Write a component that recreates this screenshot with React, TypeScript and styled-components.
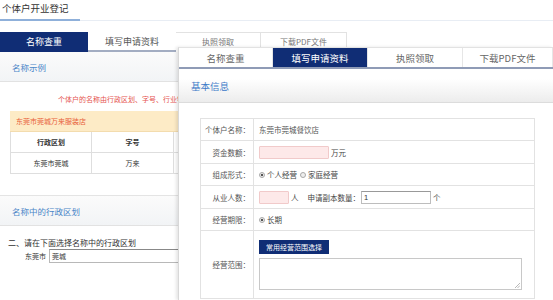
import React from "react";
import styled, { createGlobalStyle } from "styled-components";

const GlobalStyle = createGlobalStyle`
  html, body { margin: 0; padding: 0; background: #fff; }
  body { font-family: "Noto Sans CJK SC", "Noto Sans", sans-serif; color: #333; }
  * { box-sizing: border-box; }
`;

const NAVY = "#102d75";

const Page = styled.div`
  position: relative;
  width: 553px;
  height: 300px;
  overflow: hidden;
  background: #fff;
`;

const TitleBar = styled.div`
  height: 21px;
  border-bottom: 1px solid #e8edf4;
`;

const Title = styled.div`
  width: 80px;
  padding-left: 2px;
  font-size: 9.5px;
  line-height: 16px;
  height: 21px;
  color: #333;
  border-bottom: 2px solid #8fb0da;
`;

const BgTabs = styled.div`
  display: flex;
  margin-top: 11px;
  height: 20px;
`;

const BgTab = styled.div<{ $w: number; $active?: boolean; $under?: boolean }>`
  width: ${(p) => p.$w}px;
  height: 20px;
  display: flex;
  align-items: center;
  justify-content: center;
  font-size: 9px;
  color: ${(p) => (p.$active ? "#fff" : "#555")};
  background: ${(p) => (p.$active ? NAVY : "#fff")};
  border-bottom: 2px solid ${(p) => (p.$active ? NAVY : "#a3adc2")};
  ${(p) => (p.$under ? "border-top:1px solid #e2e2e2;border-right:1px solid #e2e2e2;border-bottom:none;align-items:flex-start;padding-top:3px;font-size:8px;color:#777;" : "")}
`;

const BgPanel = styled.div`
  width: 360px;
`;

const SectionHead = styled.div`
  height: 30px;
  line-height: 30px;
  padding-left: 12px;
  font-size: 8.5px;
  color: #4a86c8;
  background: linear-gradient(#fbfbfb, #f2f4f6);
  border-bottom: 1px solid #e2e2e2;
`;

const Section = styled.div`
  padding-bottom: 21px;
  border-bottom: 1px solid #e4e4e4;
`;

const RedNote = styled.div`
  padding: 11px 0 0 58px;
  line-height: 12px;
  font-size: 7px;
  color: #e5534f;
  white-space: nowrap;
`;

const YellowBand = styled.div`
  margin: 6px 0 0 10px;
  height: 21px;
  line-height: 21px;
  padding-left: 6px;
  font-size: 7px;
  color: #e8603a;
  background: #fdebc6;
  border-bottom: 1px solid #f3dcae;
`;

const ExTable = styled.div`
  margin-left: 10px;
  display: grid;
  grid-template-columns: 81px 82px 82px 82px;
  border-left: 1px solid #dedede;
`;

const ExCell = styled.div<{ $head?: boolean }>`
  height: 21px;
  display: flex;
  align-items: center;
  justify-content: center;
  font-size: 7px;
  font-weight: ${(p) => (p.$head ? 700 : 400)};
  color: #333;
  border-right: 1px solid #dedede;
  border-bottom: 1px solid #dedede;
`;

const Instruction = styled.div`
  margin-top: 11px;
  padding-left: 8px;
  line-height: 12px;
  font-size: 8px;
  color: #333;
`;

const DistrictRow = styled.div`
  display: flex;
  align-items: center;
  padding-left: 25px;
  gap: 3px;
  height: 14px;
  font-size: 7px;
  color: #333;
`;

const DistrictInput = styled.div`
  width: 220px;
  height: 14px;
  border: 1px solid #b8b8b8;
  border-top-color: #888;
  padding-left: 2px;
  line-height: 12px;
  font-size: 7px;
  color: #333;
`;

const Overlay = styled.div`
  position: absolute;
  left: 178px;
  top: 47px;
  width: 375px;
  height: 253px;
  background: #fff;
  border-left: 1px solid #d8d8d8;
  border-top: 1px solid #e2e2e2;
  box-shadow: -2px 0 3px rgba(0, 0, 0, 0.1);
`;

const OvTabs = styled.div`
  display: flex;
  height: 21px;
  border-bottom: 2px solid #8f9bb6;
`;

const OvTab = styled.div<{ $w: number; $active?: boolean }>`
  width: ${(p) => p.$w}px;
  display: flex;
  align-items: center;
  justify-content: center;
  font-size: 9.5px;
  color: ${(p) => (p.$active ? "#fff" : "#666")};
  background: ${(p) => (p.$active ? NAVY : "#fff")};
  border-right: 1px solid #e6e6e6;
`;

const OvHead = styled.div`
  height: 34px;
  padding: 10px 0 0 12px;
  font-size: 9.5px;
  color: #3c7ac8;
  background: linear-gradient(#fff 30%, #ececec);
  border-bottom: 1px solid #dcdcdc;
`;

const OvBody = styled.div`
  padding: 15px 18px 0 21px;
`;

const Form = styled.div`
  display: grid;
  grid-template-columns: 53px 1fr;
  border: 1px solid #e2e2e2;
  border-bottom: none;
`;

const Label = styled.div<{ $h: number }>`
  height: ${(p) => p.$h}px;
  display: flex;
  align-items: center;
  justify-content: flex-end;
  padding-right: 3px;
  font-size: 7.5px;
  color: #555;
  border-right: 1px solid #e2e2e2;
  border-bottom: 1px solid #e2e2e2;
`;

const Value = styled.div<{ $h: number; $col?: boolean }>`
  height: ${(p) => p.$h}px;
  display: flex;
  flex-direction: ${(p) => (p.$col ? "column" : "row")};
  align-items: ${(p) => (p.$col ? "flex-start" : "center")};
  padding-left: 5px;
  padding-top: ${(p) => (p.$col ? "9px" : "0")};
  gap: ${(p) => (p.$col ? "4px" : "0")};
  font-size: 7.5px;
  color: #555;
  border-bottom: 1px solid #e2e2e2;
`;

const PinkInput = styled.div<{ $w: number }>`
  width: ${(p) => p.$w}px;
  height: 13px;
  background: #fde9e9;
  border: 1px solid #f1caca;
  border-radius: 1px;
  margin-right: 2px;
`;

const PlainInput = styled.div`
  width: 70px;
  height: 13px;
  border: 1px solid #bdbdbd;
  border-top-color: #999;
  padding-left: 2px;
  font-family: "Liberation Sans", sans-serif;
  font-size: 7.5px;
  line-height: 11px;
  color: #333;
  margin: 0 2px 0 1px;
`;

const Unit = styled.span<{ $ml?: number }>`
  margin-left: ${(p) => p.$ml ?? 0}px;
  color: #444;
`;

const RadioDot = styled.span<{ $on?: boolean }>`
  width: 6px;
  height: 6px;
  border-radius: 50%;
  border: 1px solid #a8a8a8;
  background: ${(p) => (p.$on ? "radial-gradient(circle, #555 0 1.3px, #f2f2f2 1.6px)" : "#eee")};
  margin-right: 2px;
  flex: none;
`;

const RadioLabel = styled.span`
  margin-right: 3px;
  color: #444;
`;

const NavyButton = styled.div`
  width: 70px;
  height: 14px;
  background: ${NAVY};
  color: #fff;
  font-size: 7px;
  display: flex;
  align-items: center;
  justify-content: center;
`;

const TextArea = styled.div`
  position: relative;
  width: 263px;
  height: 32px;
  border: 1px solid #c8c8c8;
`;

const Grip = styled.svg`
  position: absolute;
  right: 1px;
  bottom: 1px;
`;

export default function App() {
  return (
    <Page>
      <GlobalStyle />
      <TitleBar>
        <Title>个体户开业登记</Title>
      </TitleBar>
      <BgTabs>
        <BgTab $w={88} $active>名称查重</BgTab>
        <BgTab $w={88}>填写申请资料</BgTab>
        <BgTab $w={85} $under>执照领取</BgTab>
        <BgTab $w={86} $under>下载PDF文件</BgTab>
      </BgTabs>
      <BgPanel>
        <Section>
          <SectionHead>名称示例</SectionHead>
          <RedNote>个体户的名称由行政区划、字号、行业特点、组织形式依次组成</RedNote>
          <YellowBand>东莞市莞城万来服装店</YellowBand>
          <ExTable>
            <ExCell $head>行政区划</ExCell>
            <ExCell $head>字号</ExCell>
            <ExCell $head>行业特点</ExCell>
            <ExCell $head>组织形式</ExCell>
            <ExCell>东莞市莞城</ExCell>
            <ExCell>万来</ExCell>
            <ExCell>服装</ExCell>
            <ExCell>店</ExCell>
          </ExTable>
        </Section>
        <SectionHead>名称中的行政区划</SectionHead>
        <Instruction>二、请在下面选择名称中的行政区划</Instruction>
        <DistrictRow>
          东莞市
          <DistrictInput>莞城</DistrictInput>
        </DistrictRow>
      </BgPanel>

      <Overlay>
        <OvTabs>
          <OvTab $w={94}>名称查重</OvTab>
          <OvTab $w={95} $active>填写申请资料</OvTab>
          <OvTab $w={95}>执照领取</OvTab>
          <OvTab $w={90}>下载PDF文件</OvTab>
        </OvTabs>
        <OvHead>基本信息</OvHead>
        <OvBody>
          <Form>
            <Label $h={22}>个体户名称：</Label>
            <Value $h={22}>东莞市莞城餐饮店</Value>

            <Label $h={23}>资金数额：</Label>
            <Value $h={23}>
              <PinkInput $w={70} />
              <Unit>万元</Unit>
            </Value>

            <Label $h={22}>组成形式：</Label>
            <Value $h={22}>
              <RadioDot $on />
              <RadioLabel>个人经营</RadioLabel>
              <RadioDot />
              <RadioLabel>家庭经营</RadioLabel>
            </Value>

            <Label $h={23}>从业人数：</Label>
            <Value $h={23}>
              <PinkInput $w={30} />
              <Unit>人</Unit>
              <Unit $ml={9}>申请副本数量：</Unit>
              <PlainInput>1</PlainInput>
              <Unit>个</Unit>
            </Value>

            <Label $h={22}>经营期限：</Label>
            <Value $h={22}>
              <RadioDot $on />
              <RadioLabel>长期</RadioLabel>
            </Value>

            <Label $h={68}>经营范围：</Label>
            <Value $h={68} $col>
              <NavyButton>常用经营范围选择</NavyButton>
              <TextArea>
                <Grip width="5" height="5" viewBox="0 0 5 5">
                  <path d="M5 0L0 5M5 2.5L2.5 5" stroke="#999" strokeWidth="0.7" />
                </Grip>
              </TextArea>
            </Value>
          </Form>
        </OvBody>
      </Overlay>
    </Page>
  );
}
